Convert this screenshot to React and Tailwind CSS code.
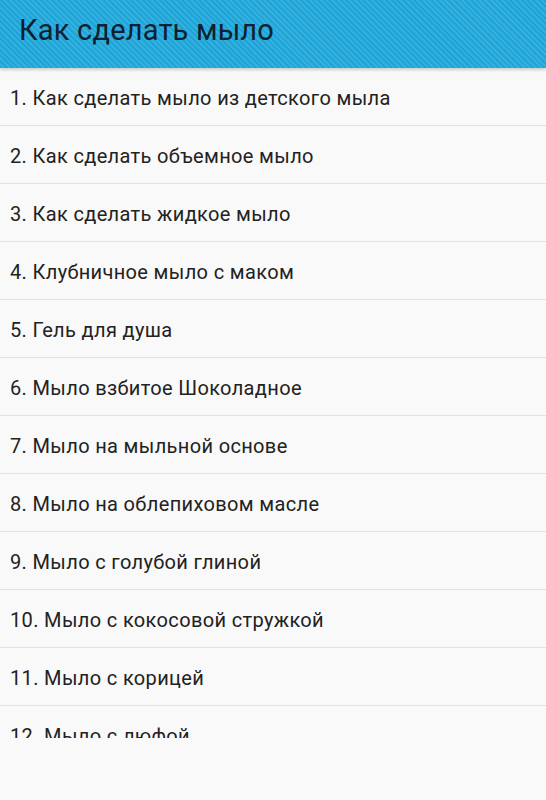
const items = [
  "1. Как сделать мыло из детского мыла",
  "2. Как сделать объемное мыло",
  "3. Как сделать жидкое мыло",
  "4. Клубничное мыло с маком",
  "5. Гель для душа",
  "6. Мыло взбитое Шоколадное",
  "7. Мыло на мыльной основе",
  "8. Мыло на облепиховом масле",
  "9. Мыло с голубой глиной",
  "10. Мыло с кокосовой стружкой",
  "11. Мыло с корицей",
  "12. Мыло с люфой",
];

export default function App() {
  return (
    <div className="w-[546px] h-[800px] bg-[#f9f9f9] font-['Roboto',sans-serif] overflow-hidden">
      <header className="relative z-10 h-[68px] flex items-center pl-[19px] bg-[repeating-linear-gradient(45deg,#1ea4d7_0px,#1ea4d7_2px,#34b0df_2px,#34b0df_4px)] shadow-[0_2px_3px_rgba(0,0,0,0.18)]">
        <h1 className="text-[29px] text-[#0e2130] leading-none -mt-[8px] tracking-[0.2px]">Как сделать мыло</h1>
      </header>
      <ul className="h-[670px] overflow-hidden">
        {items.map((item) => (
          <li
            key={item}
            className="h-[58px] flex items-center pl-[10px] pt-[3px] border-b border-[#e2e2e2] text-[20px] tracking-[0.35px] text-[#222]"
          >
            {item}
          </li>
        ))}
      </ul>
    </div>
  );
}
